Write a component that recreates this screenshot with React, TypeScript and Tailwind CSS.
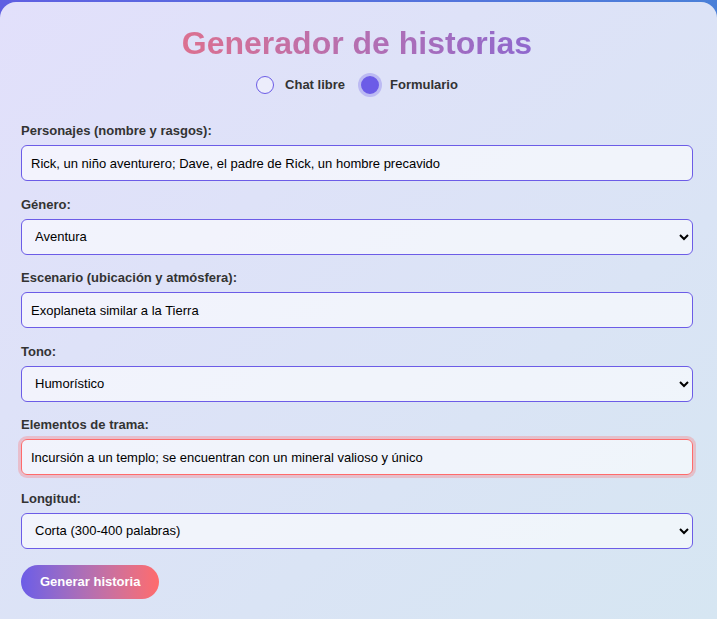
import React from "react";

const font = { fontFamily: '"Liberation Sans", Arial, sans-serif' };

function Field({ label, children }: { label: string; children: React.ReactNode }) {
  return (
    <div className="mb-[15.6px]">
      <label className="block text-[13px] leading-[15px] font-bold text-[#333] mb-[7px]">{label}</label>
      {children}
    </div>
  );
}

const inputCls =
  "block w-full h-[36px] px-[9px] text-[13px] text-black bg-white/60 border border-[#6c5ce7] rounded-[6px] outline-none";

export default function App() {
  return (
    <div style={font} className="min-h-[619px] bg-gradient-to-r from-[#5f5fe2] to-[#4a80d8] pt-[2px]">
      <div className="min-h-[617px] rounded-t-[16px] bg-gradient-to-br from-[#e2e0fb] to-[#d6e6f2] pl-[21px] pr-[24px] pt-[23px] pb-[20px]">
        <h1 className="text-[32px] leading-[37px] font-bold text-center bg-gradient-to-r from-[#ff6b6b] to-[#6c5ce7] bg-clip-text text-transparent">
          Generador de historias
        </h1>
        <div className="mt-[13px] flex justify-center items-center gap-[16px] h-[20px]">
          <label className="flex items-center gap-[11px] text-[13px] font-bold text-[#333]">
            <span className="w-[18px] h-[18px] rounded-full border-[1.5px] border-[#6c5ce7] bg-white/40" />
            Chat libre
          </label>
          <label className="flex items-center gap-[11px] text-[13px] font-bold text-[#333]">
            <span className="w-[18px] h-[18px] rounded-full border-2 border-[#6c5ce7] bg-[#6c5ce7] shadow-[0_0_0_3px_rgba(108,92,231,0.3)]" />
            Formulario
          </label>
        </div>
        <div className="mt-[28px]">
          <Field label="Personajes (nombre y rasgos):">
            <input className={inputCls} defaultValue="Rick, un niño aventurero; Dave, el padre de Rick, un hombre precavido" />
          </Field>
          <Field label="Género:">
            <select className={inputCls} defaultValue="Aventura">
              <option>Aventura</option>
              <option>Fantasía</option>
              <option>Ciencia ficción</option>
            </select>
          </Field>
          <Field label="Escenario (ubicación y atmósfera):">
            <input className={inputCls} defaultValue="Exoplaneta similar a la Tierra" />
          </Field>
          <Field label="Tono:">
            <select className={inputCls} defaultValue="Humorístico">
              <option>Humorístico</option>
              <option>Serio</option>
            </select>
          </Field>
          <Field label="Elementos de trama:">
            <input
              className="block w-full h-[36px] px-[9px] text-[13px] text-black bg-white/60 border border-[#ff6b6b] rounded-[6px] outline-none shadow-[0_0_0_3px_rgba(255,107,107,0.3)]"
              defaultValue="Incursión a un templo; se encuentran con un mineral valioso y único"
            />
          </Field>
          <Field label="Longitud:">
            <select className={inputCls} defaultValue="Corta (300-400 palabras)">
              <option>Corta (300-400 palabras)</option>
              <option>Media (600-800 palabras)</option>
            </select>
          </Field>
          <button className="h-[34px] px-[19px] rounded-full bg-gradient-to-r from-[#6c5ce7] to-[#ff6b6b] text-white text-[13px] font-bold">
            Generar historia
          </button>
        </div>
      </div>
    </div>
  );
}
